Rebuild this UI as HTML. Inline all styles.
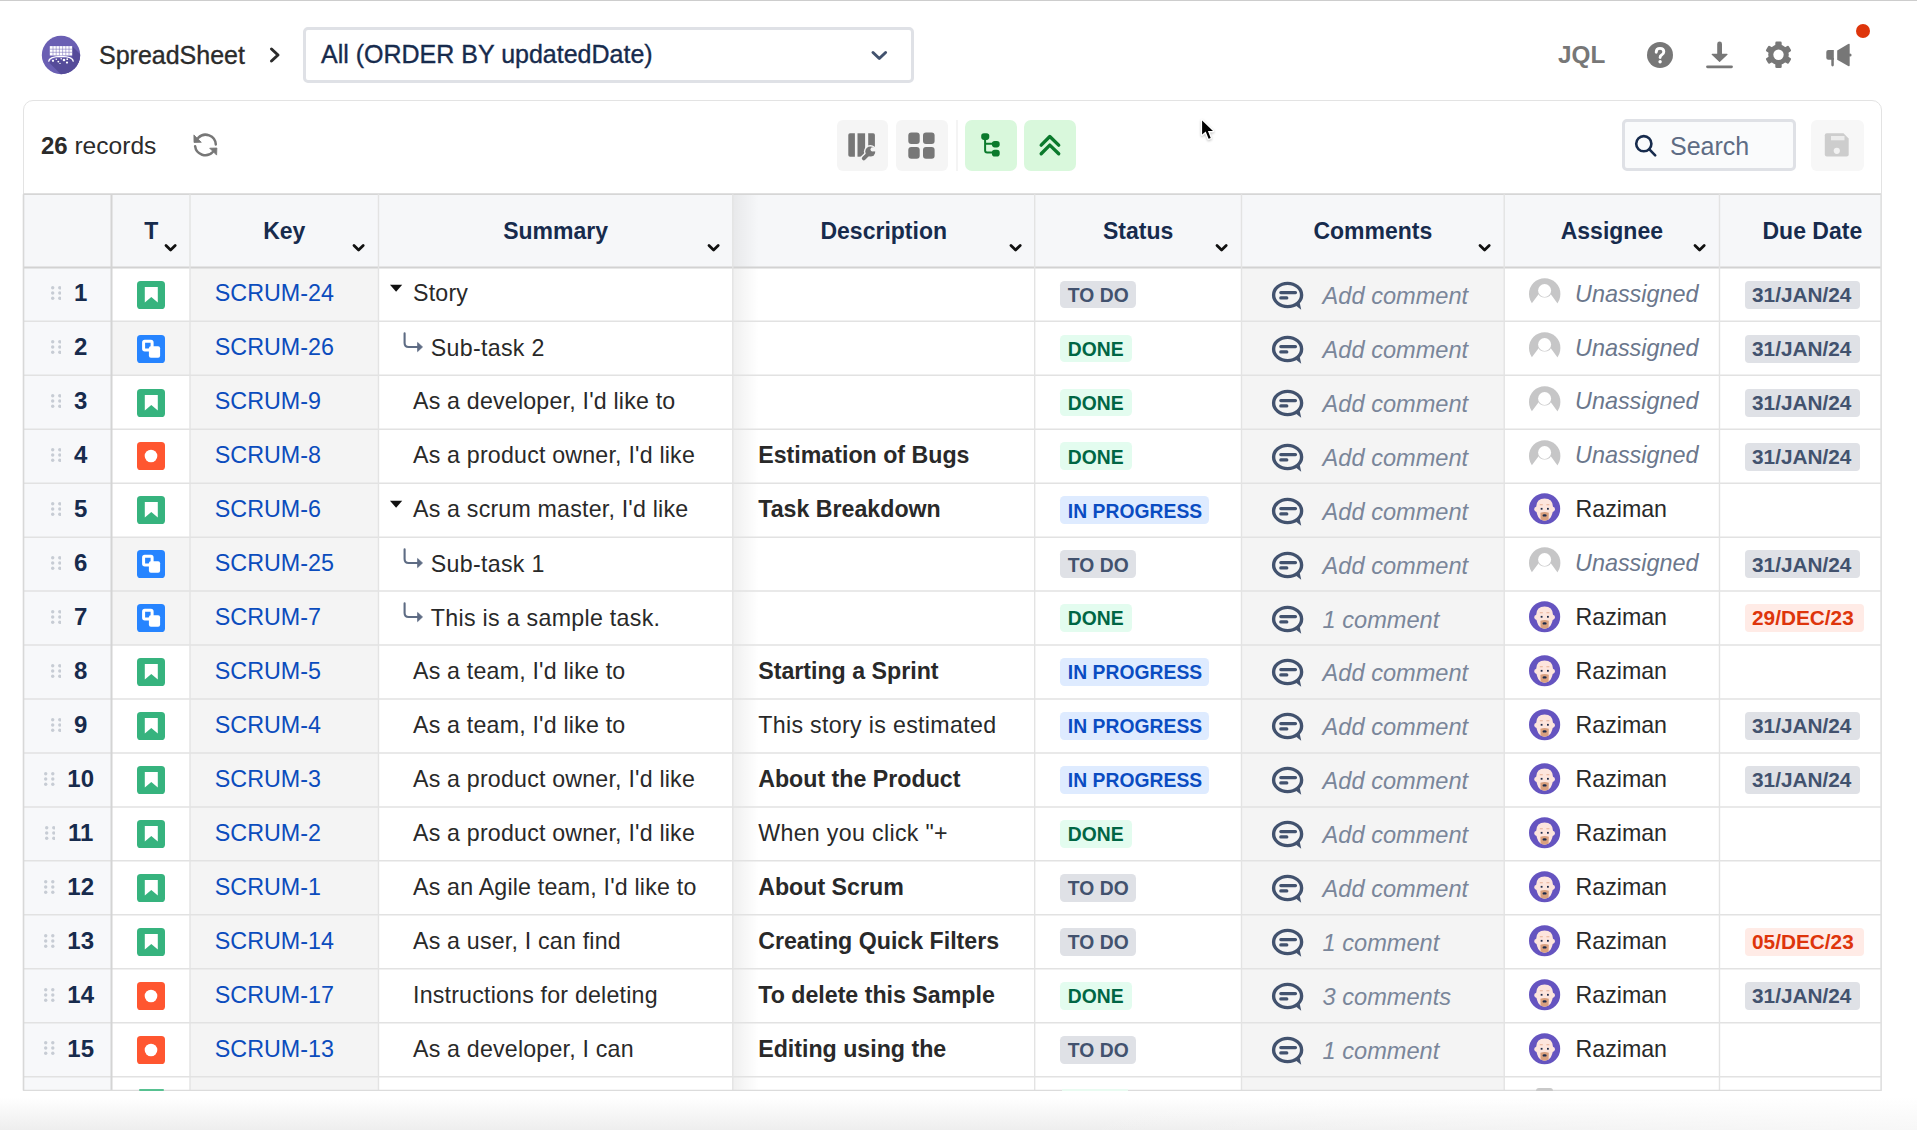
<!DOCTYPE html><html><head><meta charset="utf-8"><style>
*{box-sizing:border-box}
html,body{margin:0;padding:0}
body{width:1917px;height:1130px;overflow:hidden;background:#fff;position:relative;font-family:"Liberation Sans",sans-serif}
.a{position:absolute;white-space:nowrap;line-height:1}
svg.a{overflow:visible}
</style></head><body><div class="a" style="left:0.00px;top:0.00px;width:1917.00px;height:1.20px;background:#cdcdcd;border-radius:0px;"></div>
<svg class="a" style="left:41.00px;top:34.50px;" width="40" height="40" viewBox="0 0 40 40">
<defs><clipPath id="lc"><circle cx="20" cy="20" r="19.2"/></clipPath></defs>
<circle cx="20" cy="20" r="19.2" fill="#6a5fb3"/>
<g clip-path="url(#lc)"><path d="M31.2 11.2 L61.2 41.2 L38.6 58 L8.6 28 L8.6 26.5 Q20 20.5 31.2 24 Z" fill="#554b99"/></g>
<rect x="8.8" y="11.1" width="22.4" height="9.4" fill="#fff"/>
<g stroke="#7a70bb" stroke-width="0.55">
<line x1="8.8" y1="14.2" x2="31.2" y2="14.2"/><line x1="8.8" y1="17.3" x2="31.2" y2="17.3"/>
<line x1="12" y1="11.1" x2="12" y2="20.5"/><line x1="15.2" y1="11.1" x2="15.2" y2="20.5"/><line x1="18.4" y1="11.1" x2="18.4" y2="20.5"/><line x1="21.6" y1="11.1" x2="21.6" y2="20.5"/><line x1="24.8" y1="11.1" x2="24.8" y2="20.5"/><line x1="28" y1="11.1" x2="28" y2="20.5"/>
</g>
<path d="M7.6 26.6 Q8 21.6 20 21.4 Q32 21.6 32.4 26.6" fill="none" stroke="#fff" stroke-width="1.3"/>
<g fill="#fff"><circle cx="12" cy="25.8" r="1.1"/><circle cx="15.3" cy="24.2" r="0.8"/><circle cx="17.3" cy="26.6" r="0.9"/><circle cx="20.2" cy="23.8" r="0.8"/><circle cx="23" cy="25" r="1.3"/><circle cx="26.2" cy="24.2" r="0.9"/><circle cx="26" cy="27.6" r="1.1"/><circle cx="19" cy="28.4" r="0.7"/></g>
</svg>
<div class="a" style="left:99.00px;top:42.63px;font-size:25px;color:#2b2b2b;font-weight:400;font-style:normal;-webkit-text-stroke:0.35px #2b2b2b">SpreadSheet</div>
<svg class="a" style="left:268.00px;top:46.00px;" width="14" height="18" viewBox="0 0 14 18"><polyline points="3.5,3 10,9 3.5,15" fill="none" stroke="#2b2b2b" stroke-width="3" stroke-linecap="round" stroke-linejoin="round"/></svg>
<div class="a" style="left:302.5px;top:26.5px;width:611.5px;height:56px;border:3px solid #dfe1e6;border-radius:5px;background:#fff"></div>
<div class="a" style="left:321.00px;top:42.43px;font-size:25px;color:#172b4d;font-weight:400;font-style:normal;-webkit-text-stroke:0.35px #172b4d">All (ORDER BY updatedDate)</div>
<svg class="a" style="left:870.00px;top:49.00px;" width="18" height="13" viewBox="0 0 18 13"><polyline points="3,3.5 9.3,9.5 15.6,3.5" fill="none" stroke="#42526e" stroke-width="3" stroke-linecap="round" stroke-linejoin="round"/></svg>
<div class="a" style="left:1558.00px;top:43.43px;font-size:24.3px;color:#777;font-weight:700;font-style:normal;">JQL</div>
<svg class="a" style="left:1646.50px;top:41.50px;" width="26" height="26" viewBox="0 0 26 26"><circle cx="13" cy="13" r="13" fill="#777"/><path d="M9.2 10.2 Q9.2 6.4 13 6.4 Q16.8 6.4 16.8 9.8 Q16.8 11.9 14.6 13.1 Q13.1 14 13.1 15.6" fill="none" stroke="#fff" stroke-width="2.9" stroke-linecap="round"/><circle cx="13.1" cy="19.8" r="1.7" fill="#fff"/></svg>
<svg class="a" style="left:1705.50px;top:41.50px;" width="27" height="27" viewBox="0 0 27 27"><path d="M13.6 2 V14" stroke="#777" stroke-width="4.8" stroke-linecap="round"/><path d="M6.2 12.3 L13.6 19.4 L21 12.3 Z" fill="#777" stroke="#777" stroke-width="1.2" stroke-linejoin="round"/><path d="M1.5 24.8 H25.5" stroke="#777" stroke-width="2.8" stroke-linecap="round"/></svg>
<svg class="a" style="left:1764.00px;top:40.00px;" width="29" height="29" viewBox="0 0 29 29"><g fill="#777"><rect x="11.3" y="1.6" width="6.4" height="6" rx="1.3" transform="rotate(0 14.5 14.8)"/><rect x="11.3" y="1.6" width="6.4" height="6" rx="1.3" transform="rotate(60 14.5 14.8)"/><rect x="11.3" y="1.6" width="6.4" height="6" rx="1.3" transform="rotate(120 14.5 14.8)"/><rect x="11.3" y="1.6" width="6.4" height="6" rx="1.3" transform="rotate(180 14.5 14.8)"/><rect x="11.3" y="1.6" width="6.4" height="6" rx="1.3" transform="rotate(240 14.5 14.8)"/><rect x="11.3" y="1.6" width="6.4" height="6" rx="1.3" transform="rotate(300 14.5 14.8)"/><circle cx="14.5" cy="14.8" r="10.3"/></g><circle cx="14.5" cy="14.8" r="5.2" fill="#fff"/></svg>
<svg class="a" style="left:1824.00px;top:41.00px;" width="30" height="28" viewBox="0 0 30 28"><g fill="#777"><path d="M4.3 9.1 H9.8 V18.7 H4.3 Q2.3 18.7 2.3 16.7 V11.1 Q2.3 9.1 4.3 9.1 Z"/><path d="M7.3 17 H9.8 V24 Q9.8 25.4 8.55 25.4 Q7.3 25.4 7.3 24 Z"/><path d="M13.2 9.4 L24.2 2.9 Q25.7 2.1 25.7 3.7 V24.2 Q25.7 25.9 24.2 25.1 L13.2 18.7 Z"/><circle cx="26" cy="14" r="1.6"/></g></svg>
<div class="a" style="left:1856px;top:23.6px;width:14.2px;height:14.2px;border-radius:50%;background:#de350b"></div>
<div class="a" style="left:22.8px;top:100.2px;width:1859px;height:1100px;border:1.4px solid #e3e3e3;border-radius:10px;background:#fff"></div>
<div class="a" style="left:41.00px;top:134.08px;font-size:24px;color:#2b2b2b;font-weight:400;font-style:normal;"><b>26</b> <span style="font-size:24.6px">records</span></div>
<svg class="a" style="left:188.00px;top:128.00px;" width="35" height="34" viewBox="0 0 35 34"><g fill="none" stroke="#777" stroke-width="2.5" stroke-linecap="round"><path d="M27.8 16.4 A10.3 10.3 0 0 0 10.2 9.8"/><path d="M7.1 18.2 A10.3 10.3 0 0 0 24.8 24"/></g><path d="M5.9 6.9 L6 14.5 L13.3 14.3 Z" fill="#777" stroke="#777" stroke-width="0.8" stroke-linejoin="round"/><path d="M21.7 20.2 L28.9 20 L28.6 27.1 Z" fill="#777" stroke="#777" stroke-width="0.8" stroke-linejoin="round"/></svg>
<div class="a" style="left:836.80px;top:119.50px;width:51.50px;height:51.50px;background:#f5f5f5;border-radius:6px;"></div>
<div class="a" style="left:896.20px;top:119.50px;width:51.50px;height:51.50px;background:#f5f5f5;border-radius:6px;"></div>
<div class="a" style="left:955.60px;top:119.50px;width:2.20px;height:51.50px;background:#f4f4f4;border-radius:0px;"></div>
<div class="a" style="left:965.00px;top:119.50px;width:52.00px;height:51.50px;background:#d9f8dc;border-radius:7px;"></div>
<div class="a" style="left:1024.30px;top:119.50px;width:52.00px;height:51.50px;background:#d9f8dc;border-radius:7px;"></div>
<svg class="a" style="left:846.00px;top:131.00px;" width="32" height="32" viewBox="0 0 32 32">
<path fill="#777" d="M4 2.3 Q2.3 2.3 2.3 4 V24 Q2.3 25.7 4 25.7 H8.9 V2.3 Z"/>
<rect x="11.5" y="2.3" width="7.6" height="23.4" fill="#777"/>
<path fill="#777" d="M22.2 2.3 H27.2 Q28.9 2.3 28.9 4 V16 L22.2 16 Z"/>
<path d="M26.7 19.2 L17.2 28.4" stroke="#f4f4f4" stroke-width="7.5" stroke-linecap="round"/>
<circle cx="24.3" cy="20.5" r="6.4" fill="#f4f4f4"/>
<path d="M24.4 20.8 L17.8 27.4" stroke="#777" stroke-width="3.9" stroke-linecap="round"/>
<circle cx="24.3" cy="20.6" r="5" fill="#777"/>
<path d="M25 19.8 L29.6 15.2 L31.5 21 Z" fill="#f4f4f4"/>
<circle cx="26.6" cy="18.4" r="2.1" fill="#f4f4f4"/>
</svg>
<svg class="a" style="left:906.00px;top:130.00px;" width="32" height="32" viewBox="0 0 32 32"><g fill="#777"><rect x="2.3" y="2.5" width="11.4" height="11.4" rx="3"/><rect x="17" y="2.5" width="11.6" height="11.4" rx="3"/><rect x="2.3" y="17.1" width="11.4" height="11.7" rx="3"/><rect x="17" y="17.1" width="11.6" height="11.7" rx="3"/></g></svg>
<svg class="a" style="left:976.00px;top:128.00px;" width="30" height="32" viewBox="0 0 30 32"><g fill="#0b7a2c"><rect x="5.2" y="5.3" width="8.1" height="6.6" rx="2.8"/><rect x="15.9" y="12.9" width="7.8" height="6.5" rx="2.8"/><rect x="15.9" y="21.8" width="7.8" height="6.8" rx="2.8"/></g><path d="M9.1 11 V22.6 Q9.1 24.6 11.1 24.6 H17 M9.1 15.8 H17" fill="none" stroke="#0b7a2c" stroke-width="2"/></svg>
<svg class="a" style="left:1036.00px;top:131.00px;" width="28" height="28" viewBox="0 0 28 28"><g fill="none" stroke="#0b7a2c" stroke-width="3.4" stroke-linecap="round" stroke-linejoin="round"><polyline points="5.2,14.1 13.8,5.5 22.7,14.1"/><polyline points="5.2,22.7 13.8,14.1 22.7,22.7"/></g></svg>
<div class="a" style="left:1621.8px;top:119.2px;width:174.5px;height:52.3px;border:3px solid #dfe1e6;border-radius:5px;background:#fafbfc"></div>
<svg class="a" style="left:1632.00px;top:132.00px;" width="28" height="28" viewBox="0 0 28 28"><circle cx="11.8" cy="11.7" r="7.6" fill="none" stroke="#172b4d" stroke-width="2.6"/><path d="M17.4 17.3 L23.2 23.3" stroke="#172b4d" stroke-width="2.6" stroke-linecap="round"/></svg>
<div class="a" style="left:1670.00px;top:133.63px;font-size:25px;color:#5e6c84;font-weight:400;font-style:normal;">Search</div>
<div class="a" style="left:1811.00px;top:119.50px;width:52.50px;height:51.50px;background:#f7f7f7;border-radius:6px;"></div>
<svg class="a" style="left:1822.00px;top:130.00px;" width="30" height="30" viewBox="0 0 30 30"><path fill="#cdcdcd" d="M2.8 5.2 Q2.8 3.2 4.8 3.2 H21.5 L26.7 8.4 V24.5 Q26.7 26.5 24.7 26.5 H4.8 Q2.8 26.5 2.8 24.5 Z"/><rect x="9" y="6" width="13.5" height="4.3" fill="#ececec"/><circle cx="14.8" cy="20.8" r="3.1" fill="#f2f2f2"/></svg>
<svg class="a" style="left:1196.00px;top:115.00px;" width="24" height="30" viewBox="0 0 24 30"><path d="M6.1 5.4 L6.1 19.6 L9.7 16.6 L12.6 23.8 L14.7 22.9 L11.9 16.1 L17 16.1 Z" fill="#000" stroke="#fff" stroke-width="2.6" stroke-linejoin="round" style="paint-order:stroke fill;filter:drop-shadow(0 1px 1px rgba(0,0,0,.25))"/></svg>
<div class="a" style="left:23.50px;top:194.20px;width:1857.50px;height:73.20px;background:#f6f7f9;border-radius:0px;"></div>
<div class="a" style="left:23.50px;top:267.40px;width:88.00px;height:53.95px;background:#f7f8fa;border-radius:0px;"></div>
<div class="a" style="left:190.00px;top:267.40px;width:188.50px;height:53.95px;background:#f4f4f4;border-radius:0px;"></div>
<div class="a" style="left:1241.50px;top:267.40px;width:262.50px;height:53.95px;background:#f4f4f4;border-radius:0px;"></div>
<div class="a" style="left:23.50px;top:321.35px;width:88.00px;height:53.95px;background:#f7f8fa;border-radius:0px;"></div>
<div class="a" style="left:111.50px;top:321.35px;width:78.50px;height:53.95px;background:#f4f4f4;border-radius:0px;"></div>
<div class="a" style="left:190.00px;top:321.35px;width:188.50px;height:53.95px;background:#f4f4f4;border-radius:0px;"></div>
<div class="a" style="left:1241.50px;top:321.35px;width:262.50px;height:53.95px;background:#f4f4f4;border-radius:0px;"></div>
<div class="a" style="left:23.50px;top:375.30px;width:88.00px;height:53.95px;background:#f7f8fa;border-radius:0px;"></div>
<div class="a" style="left:190.00px;top:375.30px;width:188.50px;height:53.95px;background:#f4f4f4;border-radius:0px;"></div>
<div class="a" style="left:1241.50px;top:375.30px;width:262.50px;height:53.95px;background:#f4f4f4;border-radius:0px;"></div>
<div class="a" style="left:23.50px;top:429.25px;width:88.00px;height:53.95px;background:#f7f8fa;border-radius:0px;"></div>
<div class="a" style="left:190.00px;top:429.25px;width:188.50px;height:53.95px;background:#f4f4f4;border-radius:0px;"></div>
<div class="a" style="left:1241.50px;top:429.25px;width:262.50px;height:53.95px;background:#f4f4f4;border-radius:0px;"></div>
<div class="a" style="left:23.50px;top:483.20px;width:88.00px;height:53.95px;background:#f7f8fa;border-radius:0px;"></div>
<div class="a" style="left:190.00px;top:483.20px;width:188.50px;height:53.95px;background:#f4f4f4;border-radius:0px;"></div>
<div class="a" style="left:1241.50px;top:483.20px;width:262.50px;height:53.95px;background:#f4f4f4;border-radius:0px;"></div>
<div class="a" style="left:23.50px;top:537.15px;width:88.00px;height:53.95px;background:#f7f8fa;border-radius:0px;"></div>
<div class="a" style="left:111.50px;top:537.15px;width:78.50px;height:53.95px;background:#f4f4f4;border-radius:0px;"></div>
<div class="a" style="left:190.00px;top:537.15px;width:188.50px;height:53.95px;background:#f4f4f4;border-radius:0px;"></div>
<div class="a" style="left:1241.50px;top:537.15px;width:262.50px;height:53.95px;background:#f4f4f4;border-radius:0px;"></div>
<div class="a" style="left:23.50px;top:591.10px;width:88.00px;height:53.95px;background:#f7f8fa;border-radius:0px;"></div>
<div class="a" style="left:111.50px;top:591.10px;width:78.50px;height:53.95px;background:#f4f4f4;border-radius:0px;"></div>
<div class="a" style="left:190.00px;top:591.10px;width:188.50px;height:53.95px;background:#f4f4f4;border-radius:0px;"></div>
<div class="a" style="left:1241.50px;top:591.10px;width:262.50px;height:53.95px;background:#f4f4f4;border-radius:0px;"></div>
<div class="a" style="left:23.50px;top:645.05px;width:88.00px;height:53.95px;background:#f7f8fa;border-radius:0px;"></div>
<div class="a" style="left:190.00px;top:645.05px;width:188.50px;height:53.95px;background:#f4f4f4;border-radius:0px;"></div>
<div class="a" style="left:1241.50px;top:645.05px;width:262.50px;height:53.95px;background:#f4f4f4;border-radius:0px;"></div>
<div class="a" style="left:23.50px;top:699.00px;width:88.00px;height:53.95px;background:#f7f8fa;border-radius:0px;"></div>
<div class="a" style="left:190.00px;top:699.00px;width:188.50px;height:53.95px;background:#f4f4f4;border-radius:0px;"></div>
<div class="a" style="left:1241.50px;top:699.00px;width:262.50px;height:53.95px;background:#f4f4f4;border-radius:0px;"></div>
<div class="a" style="left:23.50px;top:752.95px;width:88.00px;height:53.95px;background:#f7f8fa;border-radius:0px;"></div>
<div class="a" style="left:190.00px;top:752.95px;width:188.50px;height:53.95px;background:#f4f4f4;border-radius:0px;"></div>
<div class="a" style="left:1241.50px;top:752.95px;width:262.50px;height:53.95px;background:#f4f4f4;border-radius:0px;"></div>
<div class="a" style="left:23.50px;top:806.90px;width:88.00px;height:53.95px;background:#f7f8fa;border-radius:0px;"></div>
<div class="a" style="left:190.00px;top:806.90px;width:188.50px;height:53.95px;background:#f4f4f4;border-radius:0px;"></div>
<div class="a" style="left:1241.50px;top:806.90px;width:262.50px;height:53.95px;background:#f4f4f4;border-radius:0px;"></div>
<div class="a" style="left:23.50px;top:860.85px;width:88.00px;height:53.95px;background:#f7f8fa;border-radius:0px;"></div>
<div class="a" style="left:190.00px;top:860.85px;width:188.50px;height:53.95px;background:#f4f4f4;border-radius:0px;"></div>
<div class="a" style="left:1241.50px;top:860.85px;width:262.50px;height:53.95px;background:#f4f4f4;border-radius:0px;"></div>
<div class="a" style="left:23.50px;top:914.80px;width:88.00px;height:53.95px;background:#f7f8fa;border-radius:0px;"></div>
<div class="a" style="left:190.00px;top:914.80px;width:188.50px;height:53.95px;background:#f4f4f4;border-radius:0px;"></div>
<div class="a" style="left:1241.50px;top:914.80px;width:262.50px;height:53.95px;background:#f4f4f4;border-radius:0px;"></div>
<div class="a" style="left:23.50px;top:968.75px;width:88.00px;height:53.95px;background:#f7f8fa;border-radius:0px;"></div>
<div class="a" style="left:190.00px;top:968.75px;width:188.50px;height:53.95px;background:#f4f4f4;border-radius:0px;"></div>
<div class="a" style="left:1241.50px;top:968.75px;width:262.50px;height:53.95px;background:#f4f4f4;border-radius:0px;"></div>
<div class="a" style="left:23.50px;top:1022.70px;width:88.00px;height:53.95px;background:#f7f8fa;border-radius:0px;"></div>
<div class="a" style="left:190.00px;top:1022.70px;width:188.50px;height:53.95px;background:#f4f4f4;border-radius:0px;"></div>
<div class="a" style="left:1241.50px;top:1022.70px;width:262.50px;height:53.95px;background:#f4f4f4;border-radius:0px;"></div>
<div class="a" style="left:23.50px;top:1076.65px;width:88.00px;height:13.95px;background:#f7f8fa;border-radius:0px;"></div>
<div class="a" style="left:190.00px;top:1076.65px;width:188.50px;height:13.95px;background:#f4f4f4;border-radius:0px;"></div>
<div class="a" style="left:1241.50px;top:1076.65px;width:262.50px;height:13.95px;background:#f4f4f4;border-radius:0px;"></div>
<div class="a" style="left:733.3px;top:194.2px;width:26px;height:896.4px;background:linear-gradient(90deg,rgba(0,0,0,0.06),rgba(0,0,0,0.0))"></div>
<div class="a" style="left:24px;width:90px;top:267.40px;height:53.95px;display:flex;align-items:center;justify-content:center;gap:12.8px;padding-left:0px"><svg width="10.6" height="14" viewBox="0 0 10.6 14" style="margin-top:-2.4px"><g fill="#c7ccd4"><circle cx="1.7" cy="1.8" r="1.7"/><circle cx="8.8" cy="1.8" r="1.7"/><circle cx="1.7" cy="7" r="1.7"/><circle cx="8.8" cy="7" r="1.7"/><circle cx="1.7" cy="12.3" r="1.7"/><circle cx="8.8" cy="12.3" r="1.7"/></g></svg><span style="font-weight:700;font-size:24px;color:#172b4d;margin-top:-2px">1</span></div>
<svg class="a" style="left:137.20px;top:280.60px;" width="28" height="28" viewBox="0 0 28 28"><rect width="28" height="28" rx="3.6" fill="#36b37e"/><path d="M7.8 6 H20.8 V21.5 L14.3 15.9 L7.8 21.5 Z" fill="#fff"/></svg>
<div class="a" style="left:214.80px;top:282.37px;font-size:23.3px;color:#0b4cbd;font-weight:400;font-style:normal;">SCRUM-24</div>
<svg class="a" style="left:388.00px;top:283.40px;" width="16" height="10" viewBox="0 0 16 10"><path d="M2 1.8 H14.2 L8.1 8.8 Z" fill="#111"/></svg>
<div class="a" style="left:413.00px;top:282.46px;font-size:23.2px;color:#292929;font-weight:400;font-style:normal;letter-spacing:0.2px">Story</div>
<div class="a" style="left:1060.3px;top:280.60px;width:76.2px;height:27.8px;border-radius:4.5px;background:#dfe1e6"></div>
<div class="a" style="left:1067.80px;top:285.76px;font-size:19.3px;color:#42526e;font-weight:700;font-style:normal;letter-spacing:0.05px">TO DO</div>
<svg class="a" style="left:1271.90px;top:281.80px;" width="32" height="30" viewBox="0 0 32 30"><ellipse cx="15.6" cy="13" rx="14" ry="11.6" fill="none" stroke="#42526e" stroke-width="3.4"/><path d="M22.5 22.5 L29.2 27.8 L27.6 20.3 Z" fill="#42526e"/><path d="M8.8 10.6 H23.5 M8.8 15.9 H14.8" stroke="#42526e" stroke-width="3.2" stroke-linecap="round"/></svg>
<div class="a" style="left:1322.60px;top:284.82px;font-size:23.6px;color:#7a869a;font-weight:400;font-style:italic;">Add comment</div>
<svg class="a" style="left:1529.20px;top:277.70px;" width="32" height="32" viewBox="0 0 32 32"><defs><mask id="avm" maskUnits="userSpaceOnUse" x="-2" y="-2" width="36" height="36"><rect x="-2" y="-2" width="36" height="36" fill="#fff"/><circle cx="15.6" cy="12.5" r="6.5" fill="#000"/><path d="M9.6 16.2 L10.8 18 Q15.7 21 20.6 18 L21.8 16.2 L34 33 L-3 33 Z" fill="#000"/></mask></defs>
<circle cx="15.7" cy="15.9" r="15.7" fill="#c6c6c7" mask="url(#avm)"/></svg>
<div class="a" style="left:1575.00px;top:282.59px;font-size:23.4px;color:#6b778c;font-weight:400;font-style:italic;">Unassigned</div>
<div class="a" style="left:1745.1px;top:280.70px;width:114.7px;height:28px;border-radius:4px;background:#dfe1e6"></div>
<div class="a" style="left:1752.00px;top:284.79px;font-size:20.8px;color:#42526e;font-weight:700;font-style:normal;">31/JAN/24</div>
<div class="a" style="left:24px;width:90px;top:321.35px;height:53.95px;display:flex;align-items:center;justify-content:center;gap:12.8px;padding-left:0px"><svg width="10.6" height="14" viewBox="0 0 10.6 14" style="margin-top:-2.4px"><g fill="#c7ccd4"><circle cx="1.7" cy="1.8" r="1.7"/><circle cx="8.8" cy="1.8" r="1.7"/><circle cx="1.7" cy="7" r="1.7"/><circle cx="8.8" cy="7" r="1.7"/><circle cx="1.7" cy="12.3" r="1.7"/><circle cx="8.8" cy="12.3" r="1.7"/></g></svg><span style="font-weight:700;font-size:24px;color:#172b4d;margin-top:-2px">2</span></div>
<svg class="a" style="left:137.20px;top:334.55px;" width="28" height="28" viewBox="0 0 28 28"><rect width="28" height="28" rx="3.6" fill="#2684ff"/><rect x="6.6" y="6.2" width="8.5" height="8.8" rx="1.2" fill="none" stroke="#fff" stroke-width="3"/><rect x="11.9" y="11.3" width="11.2" height="11.5" rx="2" fill="#fff"/></svg>
<div class="a" style="left:214.80px;top:336.32px;font-size:23.3px;color:#0b4cbd;font-weight:400;font-style:normal;">SCRUM-26</div>
<svg class="a" style="left:402.00px;top:331.35px;" width="24" height="24" viewBox="0 0 24 24"><path d="M2.6 2.4 V11.9 Q2.6 15.95 6.6 15.95 H16.5" fill="none" stroke="#5e6c84" stroke-width="2.1" stroke-linecap="round" stroke-linejoin="round"/><path d="M15.6 11.5 L20.5 15.95 L15.6 20.6 Z" fill="#5e6c84" stroke="#5e6c84" stroke-width="0.8" stroke-linejoin="round"/></svg>
<div class="a" style="left:430.80px;top:337.01px;font-size:23.2px;color:#292929;font-weight:400;font-style:normal;letter-spacing:0.3px">Sub-task 2</div>
<div class="a" style="left:1060.3px;top:334.55px;width:71.4px;height:27.8px;border-radius:4.5px;background:#e3fcef"></div>
<div class="a" style="left:1067.80px;top:339.71px;font-size:19.3px;color:#006644;font-weight:700;font-style:normal;letter-spacing:0.05px">DONE</div>
<svg class="a" style="left:1271.90px;top:335.75px;" width="32" height="30" viewBox="0 0 32 30"><ellipse cx="15.6" cy="13" rx="14" ry="11.6" fill="none" stroke="#42526e" stroke-width="3.4"/><path d="M22.5 22.5 L29.2 27.8 L27.6 20.3 Z" fill="#42526e"/><path d="M8.8 10.6 H23.5 M8.8 15.9 H14.8" stroke="#42526e" stroke-width="3.2" stroke-linecap="round"/></svg>
<div class="a" style="left:1322.60px;top:338.77px;font-size:23.6px;color:#7a869a;font-weight:400;font-style:italic;">Add comment</div>
<svg class="a" style="left:1529.20px;top:331.65px;" width="32" height="32" viewBox="0 0 32 32"><defs><mask id="avm" maskUnits="userSpaceOnUse" x="-2" y="-2" width="36" height="36"><rect x="-2" y="-2" width="36" height="36" fill="#fff"/><circle cx="15.6" cy="12.5" r="6.5" fill="#000"/><path d="M9.6 16.2 L10.8 18 Q15.7 21 20.6 18 L21.8 16.2 L34 33 L-3 33 Z" fill="#000"/></mask></defs>
<circle cx="15.7" cy="15.9" r="15.7" fill="#c6c6c7" mask="url(#avm)"/></svg>
<div class="a" style="left:1575.00px;top:336.54px;font-size:23.4px;color:#6b778c;font-weight:400;font-style:italic;">Unassigned</div>
<div class="a" style="left:1745.1px;top:334.65px;width:114.7px;height:28px;border-radius:4px;background:#dfe1e6"></div>
<div class="a" style="left:1752.00px;top:338.74px;font-size:20.8px;color:#42526e;font-weight:700;font-style:normal;">31/JAN/24</div>
<div class="a" style="left:24px;width:90px;top:375.30px;height:53.95px;display:flex;align-items:center;justify-content:center;gap:12.8px;padding-left:0px"><svg width="10.6" height="14" viewBox="0 0 10.6 14" style="margin-top:-2.4px"><g fill="#c7ccd4"><circle cx="1.7" cy="1.8" r="1.7"/><circle cx="8.8" cy="1.8" r="1.7"/><circle cx="1.7" cy="7" r="1.7"/><circle cx="8.8" cy="7" r="1.7"/><circle cx="1.7" cy="12.3" r="1.7"/><circle cx="8.8" cy="12.3" r="1.7"/></g></svg><span style="font-weight:700;font-size:24px;color:#172b4d;margin-top:-2px">3</span></div>
<svg class="a" style="left:137.20px;top:388.50px;" width="28" height="28" viewBox="0 0 28 28"><rect width="28" height="28" rx="3.6" fill="#36b37e"/><path d="M7.8 6 H20.8 V21.5 L14.3 15.9 L7.8 21.5 Z" fill="#fff"/></svg>
<div class="a" style="left:214.80px;top:390.27px;font-size:23.3px;color:#0b4cbd;font-weight:400;font-style:normal;">SCRUM-9</div>
<div class="a" style="left:413.00px;top:390.36px;font-size:23.2px;color:#292929;font-weight:400;font-style:normal;letter-spacing:0.2px">As a developer, I'd like to</div>
<div class="a" style="left:1060.3px;top:388.50px;width:71.4px;height:27.8px;border-radius:4.5px;background:#e3fcef"></div>
<div class="a" style="left:1067.80px;top:393.66px;font-size:19.3px;color:#006644;font-weight:700;font-style:normal;letter-spacing:0.05px">DONE</div>
<svg class="a" style="left:1271.90px;top:389.70px;" width="32" height="30" viewBox="0 0 32 30"><ellipse cx="15.6" cy="13" rx="14" ry="11.6" fill="none" stroke="#42526e" stroke-width="3.4"/><path d="M22.5 22.5 L29.2 27.8 L27.6 20.3 Z" fill="#42526e"/><path d="M8.8 10.6 H23.5 M8.8 15.9 H14.8" stroke="#42526e" stroke-width="3.2" stroke-linecap="round"/></svg>
<div class="a" style="left:1322.60px;top:392.72px;font-size:23.6px;color:#7a869a;font-weight:400;font-style:italic;">Add comment</div>
<svg class="a" style="left:1529.20px;top:385.60px;" width="32" height="32" viewBox="0 0 32 32"><defs><mask id="avm" maskUnits="userSpaceOnUse" x="-2" y="-2" width="36" height="36"><rect x="-2" y="-2" width="36" height="36" fill="#fff"/><circle cx="15.6" cy="12.5" r="6.5" fill="#000"/><path d="M9.6 16.2 L10.8 18 Q15.7 21 20.6 18 L21.8 16.2 L34 33 L-3 33 Z" fill="#000"/></mask></defs>
<circle cx="15.7" cy="15.9" r="15.7" fill="#c6c6c7" mask="url(#avm)"/></svg>
<div class="a" style="left:1575.00px;top:390.49px;font-size:23.4px;color:#6b778c;font-weight:400;font-style:italic;">Unassigned</div>
<div class="a" style="left:1745.1px;top:388.60px;width:114.7px;height:28px;border-radius:4px;background:#dfe1e6"></div>
<div class="a" style="left:1752.00px;top:392.69px;font-size:20.8px;color:#42526e;font-weight:700;font-style:normal;">31/JAN/24</div>
<div class="a" style="left:24px;width:90px;top:429.25px;height:53.95px;display:flex;align-items:center;justify-content:center;gap:12.8px;padding-left:0px"><svg width="10.6" height="14" viewBox="0 0 10.6 14" style="margin-top:-2.4px"><g fill="#c7ccd4"><circle cx="1.7" cy="1.8" r="1.7"/><circle cx="8.8" cy="1.8" r="1.7"/><circle cx="1.7" cy="7" r="1.7"/><circle cx="8.8" cy="7" r="1.7"/><circle cx="1.7" cy="12.3" r="1.7"/><circle cx="8.8" cy="12.3" r="1.7"/></g></svg><span style="font-weight:700;font-size:24px;color:#172b4d;margin-top:-2px">4</span></div>
<svg class="a" style="left:137.20px;top:442.45px;" width="28" height="28" viewBox="0 0 28 28"><rect width="28" height="28" rx="3.6" fill="#ff5630"/><circle cx="14" cy="14" r="6.3" fill="#fff"/></svg>
<div class="a" style="left:214.80px;top:444.22px;font-size:23.3px;color:#0b4cbd;font-weight:400;font-style:normal;">SCRUM-8</div>
<div class="a" style="left:413.00px;top:444.31px;font-size:23.2px;color:#292929;font-weight:400;font-style:normal;letter-spacing:0.2px">As a product owner, I'd like</div>
<div class="a" style="left:758.20px;top:444.31px;font-size:23.2px;color:#292929;font-weight:700;font-style:normal;">Estimation of Bugs</div>
<div class="a" style="left:1060.3px;top:442.45px;width:71.4px;height:27.8px;border-radius:4.5px;background:#e3fcef"></div>
<div class="a" style="left:1067.80px;top:447.61px;font-size:19.3px;color:#006644;font-weight:700;font-style:normal;letter-spacing:0.05px">DONE</div>
<svg class="a" style="left:1271.90px;top:443.65px;" width="32" height="30" viewBox="0 0 32 30"><ellipse cx="15.6" cy="13" rx="14" ry="11.6" fill="none" stroke="#42526e" stroke-width="3.4"/><path d="M22.5 22.5 L29.2 27.8 L27.6 20.3 Z" fill="#42526e"/><path d="M8.8 10.6 H23.5 M8.8 15.9 H14.8" stroke="#42526e" stroke-width="3.2" stroke-linecap="round"/></svg>
<div class="a" style="left:1322.60px;top:446.67px;font-size:23.6px;color:#7a869a;font-weight:400;font-style:italic;">Add comment</div>
<svg class="a" style="left:1529.20px;top:439.55px;" width="32" height="32" viewBox="0 0 32 32"><defs><mask id="avm" maskUnits="userSpaceOnUse" x="-2" y="-2" width="36" height="36"><rect x="-2" y="-2" width="36" height="36" fill="#fff"/><circle cx="15.6" cy="12.5" r="6.5" fill="#000"/><path d="M9.6 16.2 L10.8 18 Q15.7 21 20.6 18 L21.8 16.2 L34 33 L-3 33 Z" fill="#000"/></mask></defs>
<circle cx="15.7" cy="15.9" r="15.7" fill="#c6c6c7" mask="url(#avm)"/></svg>
<div class="a" style="left:1575.00px;top:444.44px;font-size:23.4px;color:#6b778c;font-weight:400;font-style:italic;">Unassigned</div>
<div class="a" style="left:1745.1px;top:442.55px;width:114.7px;height:28px;border-radius:4px;background:#dfe1e6"></div>
<div class="a" style="left:1752.00px;top:446.64px;font-size:20.8px;color:#42526e;font-weight:700;font-style:normal;">31/JAN/24</div>
<div class="a" style="left:24px;width:90px;top:483.20px;height:53.95px;display:flex;align-items:center;justify-content:center;gap:12.8px;padding-left:0px"><svg width="10.6" height="14" viewBox="0 0 10.6 14" style="margin-top:-2.4px"><g fill="#c7ccd4"><circle cx="1.7" cy="1.8" r="1.7"/><circle cx="8.8" cy="1.8" r="1.7"/><circle cx="1.7" cy="7" r="1.7"/><circle cx="8.8" cy="7" r="1.7"/><circle cx="1.7" cy="12.3" r="1.7"/><circle cx="8.8" cy="12.3" r="1.7"/></g></svg><span style="font-weight:700;font-size:24px;color:#172b4d;margin-top:-2px">5</span></div>
<svg class="a" style="left:137.20px;top:496.40px;" width="28" height="28" viewBox="0 0 28 28"><rect width="28" height="28" rx="3.6" fill="#36b37e"/><path d="M7.8 6 H20.8 V21.5 L14.3 15.9 L7.8 21.5 Z" fill="#fff"/></svg>
<div class="a" style="left:214.80px;top:498.17px;font-size:23.3px;color:#0b4cbd;font-weight:400;font-style:normal;">SCRUM-6</div>
<svg class="a" style="left:388.00px;top:499.20px;" width="16" height="10" viewBox="0 0 16 10"><path d="M2 1.8 H14.2 L8.1 8.8 Z" fill="#111"/></svg>
<div class="a" style="left:413.00px;top:498.26px;font-size:23.2px;color:#292929;font-weight:400;font-style:normal;letter-spacing:0.2px">As a scrum master, I'd like</div>
<div class="a" style="left:758.20px;top:498.26px;font-size:23.2px;color:#292929;font-weight:700;font-style:normal;">Task Breakdown</div>
<div class="a" style="left:1060.3px;top:496.40px;width:148.4px;height:27.8px;border-radius:4.5px;background:#deebff"></div>
<div class="a" style="left:1067.80px;top:501.56px;font-size:19.3px;color:#0a4cc2;font-weight:700;font-style:normal;letter-spacing:0.05px">IN PROGRESS</div>
<svg class="a" style="left:1271.90px;top:497.60px;" width="32" height="30" viewBox="0 0 32 30"><ellipse cx="15.6" cy="13" rx="14" ry="11.6" fill="none" stroke="#42526e" stroke-width="3.4"/><path d="M22.5 22.5 L29.2 27.8 L27.6 20.3 Z" fill="#42526e"/><path d="M8.8 10.6 H23.5 M8.8 15.9 H14.8" stroke="#42526e" stroke-width="3.2" stroke-linecap="round"/></svg>
<div class="a" style="left:1322.60px;top:500.62px;font-size:23.6px;color:#7a869a;font-weight:400;font-style:italic;">Add comment</div>
<svg class="a" style="left:1529.20px;top:493.20px;" width="32" height="32" viewBox="0 0 32 32"><circle cx="15.6" cy="15.75" r="15.6" fill="#6554c0"/>
<path d="M15.6 5.6 Q23.6 5.6 24 13.8 Q26.2 14.2 26 16.6 Q25.8 18.6 23.7 18.9 Q22.6 24.2 19.6 26.6 Q17.8 27.7 15.6 27.7 Q13.4 27.7 11.6 26.6 Q8.6 24.2 7.5 18.9 Q5.4 18.6 5.2 16.6 Q5 14.2 7.2 13.8 Q7.6 5.6 15.6 5.6 Z" fill="#fde5dd"/>
<path d="M11.4 19.8 Q15.6 18.4 19.8 19.8 L19.6 26.6 Q17.8 27.7 15.6 27.7 Q13.4 27.7 11.6 26.6 Z" fill="#d9a07e"/>
<ellipse cx="15.6" cy="22.4" rx="2.1" ry="1.2" fill="#1d2b4a"/>
<rect x="11.7" y="14.9" width="1.8" height="1.8" fill="#1d2b4a"/><rect x="18" y="14.9" width="1.8" height="1.8" fill="#1d2b4a"/>
<path d="M10.8 11.8 H13.8 M17.4 11.8 H20.4" stroke="#e8b196" stroke-width="1.1"/></svg>
<div class="a" style="left:1575.50px;top:498.26px;font-size:23.2px;color:#292929;font-weight:400;font-style:normal;">Raziman</div>
<div class="a" style="left:24px;width:90px;top:537.15px;height:53.95px;display:flex;align-items:center;justify-content:center;gap:12.8px;padding-left:0px"><svg width="10.6" height="14" viewBox="0 0 10.6 14" style="margin-top:-2.4px"><g fill="#c7ccd4"><circle cx="1.7" cy="1.8" r="1.7"/><circle cx="8.8" cy="1.8" r="1.7"/><circle cx="1.7" cy="7" r="1.7"/><circle cx="8.8" cy="7" r="1.7"/><circle cx="1.7" cy="12.3" r="1.7"/><circle cx="8.8" cy="12.3" r="1.7"/></g></svg><span style="font-weight:700;font-size:24px;color:#172b4d;margin-top:-2px">6</span></div>
<svg class="a" style="left:137.20px;top:550.35px;" width="28" height="28" viewBox="0 0 28 28"><rect width="28" height="28" rx="3.6" fill="#2684ff"/><rect x="6.6" y="6.2" width="8.5" height="8.8" rx="1.2" fill="none" stroke="#fff" stroke-width="3"/><rect x="11.9" y="11.3" width="11.2" height="11.5" rx="2" fill="#fff"/></svg>
<div class="a" style="left:214.80px;top:552.12px;font-size:23.3px;color:#0b4cbd;font-weight:400;font-style:normal;">SCRUM-25</div>
<svg class="a" style="left:402.00px;top:547.15px;" width="24" height="24" viewBox="0 0 24 24"><path d="M2.6 2.4 V11.9 Q2.6 15.95 6.6 15.95 H16.5" fill="none" stroke="#5e6c84" stroke-width="2.1" stroke-linecap="round" stroke-linejoin="round"/><path d="M15.6 11.5 L20.5 15.95 L15.6 20.6 Z" fill="#5e6c84" stroke="#5e6c84" stroke-width="0.8" stroke-linejoin="round"/></svg>
<div class="a" style="left:430.80px;top:552.81px;font-size:23.2px;color:#292929;font-weight:400;font-style:normal;letter-spacing:0.3px">Sub-task 1</div>
<div class="a" style="left:1060.3px;top:550.35px;width:76.2px;height:27.8px;border-radius:4.5px;background:#dfe1e6"></div>
<div class="a" style="left:1067.80px;top:555.51px;font-size:19.3px;color:#42526e;font-weight:700;font-style:normal;letter-spacing:0.05px">TO DO</div>
<svg class="a" style="left:1271.90px;top:551.55px;" width="32" height="30" viewBox="0 0 32 30"><ellipse cx="15.6" cy="13" rx="14" ry="11.6" fill="none" stroke="#42526e" stroke-width="3.4"/><path d="M22.5 22.5 L29.2 27.8 L27.6 20.3 Z" fill="#42526e"/><path d="M8.8 10.6 H23.5 M8.8 15.9 H14.8" stroke="#42526e" stroke-width="3.2" stroke-linecap="round"/></svg>
<div class="a" style="left:1322.60px;top:554.57px;font-size:23.6px;color:#7a869a;font-weight:400;font-style:italic;">Add comment</div>
<svg class="a" style="left:1529.20px;top:547.45px;" width="32" height="32" viewBox="0 0 32 32"><defs><mask id="avm" maskUnits="userSpaceOnUse" x="-2" y="-2" width="36" height="36"><rect x="-2" y="-2" width="36" height="36" fill="#fff"/><circle cx="15.6" cy="12.5" r="6.5" fill="#000"/><path d="M9.6 16.2 L10.8 18 Q15.7 21 20.6 18 L21.8 16.2 L34 33 L-3 33 Z" fill="#000"/></mask></defs>
<circle cx="15.7" cy="15.9" r="15.7" fill="#c6c6c7" mask="url(#avm)"/></svg>
<div class="a" style="left:1575.00px;top:552.34px;font-size:23.4px;color:#6b778c;font-weight:400;font-style:italic;">Unassigned</div>
<div class="a" style="left:1745.1px;top:550.45px;width:114.7px;height:28px;border-radius:4px;background:#dfe1e6"></div>
<div class="a" style="left:1752.00px;top:554.54px;font-size:20.8px;color:#42526e;font-weight:700;font-style:normal;">31/JAN/24</div>
<div class="a" style="left:24px;width:90px;top:591.10px;height:53.95px;display:flex;align-items:center;justify-content:center;gap:12.8px;padding-left:0px"><svg width="10.6" height="14" viewBox="0 0 10.6 14" style="margin-top:-2.4px"><g fill="#c7ccd4"><circle cx="1.7" cy="1.8" r="1.7"/><circle cx="8.8" cy="1.8" r="1.7"/><circle cx="1.7" cy="7" r="1.7"/><circle cx="8.8" cy="7" r="1.7"/><circle cx="1.7" cy="12.3" r="1.7"/><circle cx="8.8" cy="12.3" r="1.7"/></g></svg><span style="font-weight:700;font-size:24px;color:#172b4d;margin-top:-2px">7</span></div>
<svg class="a" style="left:137.20px;top:604.30px;" width="28" height="28" viewBox="0 0 28 28"><rect width="28" height="28" rx="3.6" fill="#2684ff"/><rect x="6.6" y="6.2" width="8.5" height="8.8" rx="1.2" fill="none" stroke="#fff" stroke-width="3"/><rect x="11.9" y="11.3" width="11.2" height="11.5" rx="2" fill="#fff"/></svg>
<div class="a" style="left:214.80px;top:606.07px;font-size:23.3px;color:#0b4cbd;font-weight:400;font-style:normal;">SCRUM-7</div>
<svg class="a" style="left:402.00px;top:601.10px;" width="24" height="24" viewBox="0 0 24 24"><path d="M2.6 2.4 V11.9 Q2.6 15.95 6.6 15.95 H16.5" fill="none" stroke="#5e6c84" stroke-width="2.1" stroke-linecap="round" stroke-linejoin="round"/><path d="M15.6 11.5 L20.5 15.95 L15.6 20.6 Z" fill="#5e6c84" stroke="#5e6c84" stroke-width="0.8" stroke-linejoin="round"/></svg>
<div class="a" style="left:430.80px;top:606.76px;font-size:23.2px;color:#292929;font-weight:400;font-style:normal;letter-spacing:0.3px">This is a sample task.</div>
<div class="a" style="left:1060.3px;top:604.30px;width:71.4px;height:27.8px;border-radius:4.5px;background:#e3fcef"></div>
<div class="a" style="left:1067.80px;top:609.46px;font-size:19.3px;color:#006644;font-weight:700;font-style:normal;letter-spacing:0.05px">DONE</div>
<svg class="a" style="left:1271.90px;top:605.50px;" width="32" height="30" viewBox="0 0 32 30"><ellipse cx="15.6" cy="13" rx="14" ry="11.6" fill="none" stroke="#42526e" stroke-width="3.4"/><path d="M22.5 22.5 L29.2 27.8 L27.6 20.3 Z" fill="#42526e"/><path d="M8.8 10.6 H23.5 M8.8 15.9 H14.8" stroke="#42526e" stroke-width="3.2" stroke-linecap="round"/></svg>
<div class="a" style="left:1322.60px;top:608.52px;font-size:23.6px;color:#7a869a;font-weight:400;font-style:italic;">1 comment</div>
<svg class="a" style="left:1529.20px;top:601.10px;" width="32" height="32" viewBox="0 0 32 32"><circle cx="15.6" cy="15.75" r="15.6" fill="#6554c0"/>
<path d="M15.6 5.6 Q23.6 5.6 24 13.8 Q26.2 14.2 26 16.6 Q25.8 18.6 23.7 18.9 Q22.6 24.2 19.6 26.6 Q17.8 27.7 15.6 27.7 Q13.4 27.7 11.6 26.6 Q8.6 24.2 7.5 18.9 Q5.4 18.6 5.2 16.6 Q5 14.2 7.2 13.8 Q7.6 5.6 15.6 5.6 Z" fill="#fde5dd"/>
<path d="M11.4 19.8 Q15.6 18.4 19.8 19.8 L19.6 26.6 Q17.8 27.7 15.6 27.7 Q13.4 27.7 11.6 26.6 Z" fill="#d9a07e"/>
<ellipse cx="15.6" cy="22.4" rx="2.1" ry="1.2" fill="#1d2b4a"/>
<rect x="11.7" y="14.9" width="1.8" height="1.8" fill="#1d2b4a"/><rect x="18" y="14.9" width="1.8" height="1.8" fill="#1d2b4a"/>
<path d="M10.8 11.8 H13.8 M17.4 11.8 H20.4" stroke="#e8b196" stroke-width="1.1"/></svg>
<div class="a" style="left:1575.50px;top:606.16px;font-size:23.2px;color:#292929;font-weight:400;font-style:normal;">Raziman</div>
<div class="a" style="left:1745.1px;top:604.40px;width:118.5px;height:28px;border-radius:4px;background:#ffebe6"></div>
<div class="a" style="left:1752.00px;top:608.49px;font-size:20.8px;color:#de350b;font-weight:700;font-style:normal;">29/DEC/23</div>
<div class="a" style="left:24px;width:90px;top:645.05px;height:53.95px;display:flex;align-items:center;justify-content:center;gap:12.8px;padding-left:0px"><svg width="10.6" height="14" viewBox="0 0 10.6 14" style="margin-top:-2.4px"><g fill="#c7ccd4"><circle cx="1.7" cy="1.8" r="1.7"/><circle cx="8.8" cy="1.8" r="1.7"/><circle cx="1.7" cy="7" r="1.7"/><circle cx="8.8" cy="7" r="1.7"/><circle cx="1.7" cy="12.3" r="1.7"/><circle cx="8.8" cy="12.3" r="1.7"/></g></svg><span style="font-weight:700;font-size:24px;color:#172b4d;margin-top:-2px">8</span></div>
<svg class="a" style="left:137.20px;top:658.25px;" width="28" height="28" viewBox="0 0 28 28"><rect width="28" height="28" rx="3.6" fill="#36b37e"/><path d="M7.8 6 H20.8 V21.5 L14.3 15.9 L7.8 21.5 Z" fill="#fff"/></svg>
<div class="a" style="left:214.80px;top:660.02px;font-size:23.3px;color:#0b4cbd;font-weight:400;font-style:normal;">SCRUM-5</div>
<div class="a" style="left:413.00px;top:660.11px;font-size:23.2px;color:#292929;font-weight:400;font-style:normal;letter-spacing:0.2px">As a team, I'd like to</div>
<div class="a" style="left:758.20px;top:660.11px;font-size:23.2px;color:#292929;font-weight:700;font-style:normal;">Starting a Sprint</div>
<div class="a" style="left:1060.3px;top:658.25px;width:148.4px;height:27.8px;border-radius:4.5px;background:#deebff"></div>
<div class="a" style="left:1067.80px;top:663.41px;font-size:19.3px;color:#0a4cc2;font-weight:700;font-style:normal;letter-spacing:0.05px">IN PROGRESS</div>
<svg class="a" style="left:1271.90px;top:659.45px;" width="32" height="30" viewBox="0 0 32 30"><ellipse cx="15.6" cy="13" rx="14" ry="11.6" fill="none" stroke="#42526e" stroke-width="3.4"/><path d="M22.5 22.5 L29.2 27.8 L27.6 20.3 Z" fill="#42526e"/><path d="M8.8 10.6 H23.5 M8.8 15.9 H14.8" stroke="#42526e" stroke-width="3.2" stroke-linecap="round"/></svg>
<div class="a" style="left:1322.60px;top:662.47px;font-size:23.6px;color:#7a869a;font-weight:400;font-style:italic;">Add comment</div>
<svg class="a" style="left:1529.20px;top:655.05px;" width="32" height="32" viewBox="0 0 32 32"><circle cx="15.6" cy="15.75" r="15.6" fill="#6554c0"/>
<path d="M15.6 5.6 Q23.6 5.6 24 13.8 Q26.2 14.2 26 16.6 Q25.8 18.6 23.7 18.9 Q22.6 24.2 19.6 26.6 Q17.8 27.7 15.6 27.7 Q13.4 27.7 11.6 26.6 Q8.6 24.2 7.5 18.9 Q5.4 18.6 5.2 16.6 Q5 14.2 7.2 13.8 Q7.6 5.6 15.6 5.6 Z" fill="#fde5dd"/>
<path d="M11.4 19.8 Q15.6 18.4 19.8 19.8 L19.6 26.6 Q17.8 27.7 15.6 27.7 Q13.4 27.7 11.6 26.6 Z" fill="#d9a07e"/>
<ellipse cx="15.6" cy="22.4" rx="2.1" ry="1.2" fill="#1d2b4a"/>
<rect x="11.7" y="14.9" width="1.8" height="1.8" fill="#1d2b4a"/><rect x="18" y="14.9" width="1.8" height="1.8" fill="#1d2b4a"/>
<path d="M10.8 11.8 H13.8 M17.4 11.8 H20.4" stroke="#e8b196" stroke-width="1.1"/></svg>
<div class="a" style="left:1575.50px;top:660.11px;font-size:23.2px;color:#292929;font-weight:400;font-style:normal;">Raziman</div>
<div class="a" style="left:24px;width:90px;top:699.00px;height:53.95px;display:flex;align-items:center;justify-content:center;gap:12.8px;padding-left:0px"><svg width="10.6" height="14" viewBox="0 0 10.6 14" style="margin-top:-2.4px"><g fill="#c7ccd4"><circle cx="1.7" cy="1.8" r="1.7"/><circle cx="8.8" cy="1.8" r="1.7"/><circle cx="1.7" cy="7" r="1.7"/><circle cx="8.8" cy="7" r="1.7"/><circle cx="1.7" cy="12.3" r="1.7"/><circle cx="8.8" cy="12.3" r="1.7"/></g></svg><span style="font-weight:700;font-size:24px;color:#172b4d;margin-top:-2px">9</span></div>
<svg class="a" style="left:137.20px;top:712.20px;" width="28" height="28" viewBox="0 0 28 28"><rect width="28" height="28" rx="3.6" fill="#36b37e"/><path d="M7.8 6 H20.8 V21.5 L14.3 15.9 L7.8 21.5 Z" fill="#fff"/></svg>
<div class="a" style="left:214.80px;top:713.97px;font-size:23.3px;color:#0b4cbd;font-weight:400;font-style:normal;">SCRUM-4</div>
<div class="a" style="left:413.00px;top:714.06px;font-size:23.2px;color:#292929;font-weight:400;font-style:normal;letter-spacing:0.2px">As a team, I'd like to</div>
<div class="a" style="left:758.20px;top:714.06px;font-size:23.2px;color:#292929;font-weight:400;font-style:normal;letter-spacing:0.33px">This story is estimated</div>
<div class="a" style="left:1060.3px;top:712.20px;width:148.4px;height:27.8px;border-radius:4.5px;background:#deebff"></div>
<div class="a" style="left:1067.80px;top:717.36px;font-size:19.3px;color:#0a4cc2;font-weight:700;font-style:normal;letter-spacing:0.05px">IN PROGRESS</div>
<svg class="a" style="left:1271.90px;top:713.40px;" width="32" height="30" viewBox="0 0 32 30"><ellipse cx="15.6" cy="13" rx="14" ry="11.6" fill="none" stroke="#42526e" stroke-width="3.4"/><path d="M22.5 22.5 L29.2 27.8 L27.6 20.3 Z" fill="#42526e"/><path d="M8.8 10.6 H23.5 M8.8 15.9 H14.8" stroke="#42526e" stroke-width="3.2" stroke-linecap="round"/></svg>
<div class="a" style="left:1322.60px;top:716.42px;font-size:23.6px;color:#7a869a;font-weight:400;font-style:italic;">Add comment</div>
<svg class="a" style="left:1529.20px;top:709.00px;" width="32" height="32" viewBox="0 0 32 32"><circle cx="15.6" cy="15.75" r="15.6" fill="#6554c0"/>
<path d="M15.6 5.6 Q23.6 5.6 24 13.8 Q26.2 14.2 26 16.6 Q25.8 18.6 23.7 18.9 Q22.6 24.2 19.6 26.6 Q17.8 27.7 15.6 27.7 Q13.4 27.7 11.6 26.6 Q8.6 24.2 7.5 18.9 Q5.4 18.6 5.2 16.6 Q5 14.2 7.2 13.8 Q7.6 5.6 15.6 5.6 Z" fill="#fde5dd"/>
<path d="M11.4 19.8 Q15.6 18.4 19.8 19.8 L19.6 26.6 Q17.8 27.7 15.6 27.7 Q13.4 27.7 11.6 26.6 Z" fill="#d9a07e"/>
<ellipse cx="15.6" cy="22.4" rx="2.1" ry="1.2" fill="#1d2b4a"/>
<rect x="11.7" y="14.9" width="1.8" height="1.8" fill="#1d2b4a"/><rect x="18" y="14.9" width="1.8" height="1.8" fill="#1d2b4a"/>
<path d="M10.8 11.8 H13.8 M17.4 11.8 H20.4" stroke="#e8b196" stroke-width="1.1"/></svg>
<div class="a" style="left:1575.50px;top:714.06px;font-size:23.2px;color:#292929;font-weight:400;font-style:normal;">Raziman</div>
<div class="a" style="left:1745.1px;top:712.30px;width:114.7px;height:28px;border-radius:4px;background:#dfe1e6"></div>
<div class="a" style="left:1752.00px;top:716.39px;font-size:20.8px;color:#42526e;font-weight:700;font-style:normal;">31/JAN/24</div>
<div class="a" style="left:24px;width:90px;top:752.95px;height:53.95px;display:flex;align-items:center;justify-content:center;gap:12.8px;padding-left:0px"><svg width="10.6" height="14" viewBox="0 0 10.6 14" style="margin-top:-2.4px"><g fill="#c7ccd4"><circle cx="1.7" cy="1.8" r="1.7"/><circle cx="8.8" cy="1.8" r="1.7"/><circle cx="1.7" cy="7" r="1.7"/><circle cx="8.8" cy="7" r="1.7"/><circle cx="1.7" cy="12.3" r="1.7"/><circle cx="8.8" cy="12.3" r="1.7"/></g></svg><span style="font-weight:700;font-size:24px;color:#172b4d;margin-top:-2px">10</span></div>
<svg class="a" style="left:137.20px;top:766.15px;" width="28" height="28" viewBox="0 0 28 28"><rect width="28" height="28" rx="3.6" fill="#36b37e"/><path d="M7.8 6 H20.8 V21.5 L14.3 15.9 L7.8 21.5 Z" fill="#fff"/></svg>
<div class="a" style="left:214.80px;top:767.92px;font-size:23.3px;color:#0b4cbd;font-weight:400;font-style:normal;">SCRUM-3</div>
<div class="a" style="left:413.00px;top:768.01px;font-size:23.2px;color:#292929;font-weight:400;font-style:normal;letter-spacing:0.2px">As a product owner, I'd like</div>
<div class="a" style="left:758.20px;top:768.01px;font-size:23.2px;color:#292929;font-weight:700;font-style:normal;">About the Product</div>
<div class="a" style="left:1060.3px;top:766.15px;width:148.4px;height:27.8px;border-radius:4.5px;background:#deebff"></div>
<div class="a" style="left:1067.80px;top:771.31px;font-size:19.3px;color:#0a4cc2;font-weight:700;font-style:normal;letter-spacing:0.05px">IN PROGRESS</div>
<svg class="a" style="left:1271.90px;top:767.35px;" width="32" height="30" viewBox="0 0 32 30"><ellipse cx="15.6" cy="13" rx="14" ry="11.6" fill="none" stroke="#42526e" stroke-width="3.4"/><path d="M22.5 22.5 L29.2 27.8 L27.6 20.3 Z" fill="#42526e"/><path d="M8.8 10.6 H23.5 M8.8 15.9 H14.8" stroke="#42526e" stroke-width="3.2" stroke-linecap="round"/></svg>
<div class="a" style="left:1322.60px;top:770.37px;font-size:23.6px;color:#7a869a;font-weight:400;font-style:italic;">Add comment</div>
<svg class="a" style="left:1529.20px;top:762.95px;" width="32" height="32" viewBox="0 0 32 32"><circle cx="15.6" cy="15.75" r="15.6" fill="#6554c0"/>
<path d="M15.6 5.6 Q23.6 5.6 24 13.8 Q26.2 14.2 26 16.6 Q25.8 18.6 23.7 18.9 Q22.6 24.2 19.6 26.6 Q17.8 27.7 15.6 27.7 Q13.4 27.7 11.6 26.6 Q8.6 24.2 7.5 18.9 Q5.4 18.6 5.2 16.6 Q5 14.2 7.2 13.8 Q7.6 5.6 15.6 5.6 Z" fill="#fde5dd"/>
<path d="M11.4 19.8 Q15.6 18.4 19.8 19.8 L19.6 26.6 Q17.8 27.7 15.6 27.7 Q13.4 27.7 11.6 26.6 Z" fill="#d9a07e"/>
<ellipse cx="15.6" cy="22.4" rx="2.1" ry="1.2" fill="#1d2b4a"/>
<rect x="11.7" y="14.9" width="1.8" height="1.8" fill="#1d2b4a"/><rect x="18" y="14.9" width="1.8" height="1.8" fill="#1d2b4a"/>
<path d="M10.8 11.8 H13.8 M17.4 11.8 H20.4" stroke="#e8b196" stroke-width="1.1"/></svg>
<div class="a" style="left:1575.50px;top:768.01px;font-size:23.2px;color:#292929;font-weight:400;font-style:normal;">Raziman</div>
<div class="a" style="left:1745.1px;top:766.25px;width:114.7px;height:28px;border-radius:4px;background:#dfe1e6"></div>
<div class="a" style="left:1752.00px;top:770.34px;font-size:20.8px;color:#42526e;font-weight:700;font-style:normal;">31/JAN/24</div>
<div class="a" style="left:24px;width:90px;top:806.90px;height:53.95px;display:flex;align-items:center;justify-content:center;gap:12.8px;padding-left:0px"><svg width="10.6" height="14" viewBox="0 0 10.6 14" style="margin-top:-2.4px"><g fill="#c7ccd4"><circle cx="1.7" cy="1.8" r="1.7"/><circle cx="8.8" cy="1.8" r="1.7"/><circle cx="1.7" cy="7" r="1.7"/><circle cx="8.8" cy="7" r="1.7"/><circle cx="1.7" cy="12.3" r="1.7"/><circle cx="8.8" cy="12.3" r="1.7"/></g></svg><span style="font-weight:700;font-size:24px;color:#172b4d;margin-top:-2px">11</span></div>
<svg class="a" style="left:137.20px;top:820.10px;" width="28" height="28" viewBox="0 0 28 28"><rect width="28" height="28" rx="3.6" fill="#36b37e"/><path d="M7.8 6 H20.8 V21.5 L14.3 15.9 L7.8 21.5 Z" fill="#fff"/></svg>
<div class="a" style="left:214.80px;top:821.87px;font-size:23.3px;color:#0b4cbd;font-weight:400;font-style:normal;">SCRUM-2</div>
<div class="a" style="left:413.00px;top:821.96px;font-size:23.2px;color:#292929;font-weight:400;font-style:normal;letter-spacing:0.2px">As a product owner, I'd like</div>
<div class="a" style="left:758.20px;top:821.96px;font-size:23.2px;color:#292929;font-weight:400;font-style:normal;letter-spacing:0.33px">When you click "+</div>
<div class="a" style="left:1060.3px;top:820.10px;width:71.4px;height:27.8px;border-radius:4.5px;background:#e3fcef"></div>
<div class="a" style="left:1067.80px;top:825.26px;font-size:19.3px;color:#006644;font-weight:700;font-style:normal;letter-spacing:0.05px">DONE</div>
<svg class="a" style="left:1271.90px;top:821.30px;" width="32" height="30" viewBox="0 0 32 30"><ellipse cx="15.6" cy="13" rx="14" ry="11.6" fill="none" stroke="#42526e" stroke-width="3.4"/><path d="M22.5 22.5 L29.2 27.8 L27.6 20.3 Z" fill="#42526e"/><path d="M8.8 10.6 H23.5 M8.8 15.9 H14.8" stroke="#42526e" stroke-width="3.2" stroke-linecap="round"/></svg>
<div class="a" style="left:1322.60px;top:824.32px;font-size:23.6px;color:#7a869a;font-weight:400;font-style:italic;">Add comment</div>
<svg class="a" style="left:1529.20px;top:816.90px;" width="32" height="32" viewBox="0 0 32 32"><circle cx="15.6" cy="15.75" r="15.6" fill="#6554c0"/>
<path d="M15.6 5.6 Q23.6 5.6 24 13.8 Q26.2 14.2 26 16.6 Q25.8 18.6 23.7 18.9 Q22.6 24.2 19.6 26.6 Q17.8 27.7 15.6 27.7 Q13.4 27.7 11.6 26.6 Q8.6 24.2 7.5 18.9 Q5.4 18.6 5.2 16.6 Q5 14.2 7.2 13.8 Q7.6 5.6 15.6 5.6 Z" fill="#fde5dd"/>
<path d="M11.4 19.8 Q15.6 18.4 19.8 19.8 L19.6 26.6 Q17.8 27.7 15.6 27.7 Q13.4 27.7 11.6 26.6 Z" fill="#d9a07e"/>
<ellipse cx="15.6" cy="22.4" rx="2.1" ry="1.2" fill="#1d2b4a"/>
<rect x="11.7" y="14.9" width="1.8" height="1.8" fill="#1d2b4a"/><rect x="18" y="14.9" width="1.8" height="1.8" fill="#1d2b4a"/>
<path d="M10.8 11.8 H13.8 M17.4 11.8 H20.4" stroke="#e8b196" stroke-width="1.1"/></svg>
<div class="a" style="left:1575.50px;top:821.96px;font-size:23.2px;color:#292929;font-weight:400;font-style:normal;">Raziman</div>
<div class="a" style="left:24px;width:90px;top:860.85px;height:53.95px;display:flex;align-items:center;justify-content:center;gap:12.8px;padding-left:0px"><svg width="10.6" height="14" viewBox="0 0 10.6 14" style="margin-top:-2.4px"><g fill="#c7ccd4"><circle cx="1.7" cy="1.8" r="1.7"/><circle cx="8.8" cy="1.8" r="1.7"/><circle cx="1.7" cy="7" r="1.7"/><circle cx="8.8" cy="7" r="1.7"/><circle cx="1.7" cy="12.3" r="1.7"/><circle cx="8.8" cy="12.3" r="1.7"/></g></svg><span style="font-weight:700;font-size:24px;color:#172b4d;margin-top:-2px">12</span></div>
<svg class="a" style="left:137.20px;top:874.05px;" width="28" height="28" viewBox="0 0 28 28"><rect width="28" height="28" rx="3.6" fill="#36b37e"/><path d="M7.8 6 H20.8 V21.5 L14.3 15.9 L7.8 21.5 Z" fill="#fff"/></svg>
<div class="a" style="left:214.80px;top:875.82px;font-size:23.3px;color:#0b4cbd;font-weight:400;font-style:normal;">SCRUM-1</div>
<div class="a" style="left:413.00px;top:875.91px;font-size:23.2px;color:#292929;font-weight:400;font-style:normal;letter-spacing:0.2px">As an Agile team, I'd like to</div>
<div class="a" style="left:758.20px;top:875.91px;font-size:23.2px;color:#292929;font-weight:700;font-style:normal;">About Scrum</div>
<div class="a" style="left:1060.3px;top:874.05px;width:76.2px;height:27.8px;border-radius:4.5px;background:#dfe1e6"></div>
<div class="a" style="left:1067.80px;top:879.21px;font-size:19.3px;color:#42526e;font-weight:700;font-style:normal;letter-spacing:0.05px">TO DO</div>
<svg class="a" style="left:1271.90px;top:875.25px;" width="32" height="30" viewBox="0 0 32 30"><ellipse cx="15.6" cy="13" rx="14" ry="11.6" fill="none" stroke="#42526e" stroke-width="3.4"/><path d="M22.5 22.5 L29.2 27.8 L27.6 20.3 Z" fill="#42526e"/><path d="M8.8 10.6 H23.5 M8.8 15.9 H14.8" stroke="#42526e" stroke-width="3.2" stroke-linecap="round"/></svg>
<div class="a" style="left:1322.60px;top:878.27px;font-size:23.6px;color:#7a869a;font-weight:400;font-style:italic;">Add comment</div>
<svg class="a" style="left:1529.20px;top:870.85px;" width="32" height="32" viewBox="0 0 32 32"><circle cx="15.6" cy="15.75" r="15.6" fill="#6554c0"/>
<path d="M15.6 5.6 Q23.6 5.6 24 13.8 Q26.2 14.2 26 16.6 Q25.8 18.6 23.7 18.9 Q22.6 24.2 19.6 26.6 Q17.8 27.7 15.6 27.7 Q13.4 27.7 11.6 26.6 Q8.6 24.2 7.5 18.9 Q5.4 18.6 5.2 16.6 Q5 14.2 7.2 13.8 Q7.6 5.6 15.6 5.6 Z" fill="#fde5dd"/>
<path d="M11.4 19.8 Q15.6 18.4 19.8 19.8 L19.6 26.6 Q17.8 27.7 15.6 27.7 Q13.4 27.7 11.6 26.6 Z" fill="#d9a07e"/>
<ellipse cx="15.6" cy="22.4" rx="2.1" ry="1.2" fill="#1d2b4a"/>
<rect x="11.7" y="14.9" width="1.8" height="1.8" fill="#1d2b4a"/><rect x="18" y="14.9" width="1.8" height="1.8" fill="#1d2b4a"/>
<path d="M10.8 11.8 H13.8 M17.4 11.8 H20.4" stroke="#e8b196" stroke-width="1.1"/></svg>
<div class="a" style="left:1575.50px;top:875.91px;font-size:23.2px;color:#292929;font-weight:400;font-style:normal;">Raziman</div>
<div class="a" style="left:24px;width:90px;top:914.80px;height:53.95px;display:flex;align-items:center;justify-content:center;gap:12.8px;padding-left:0px"><svg width="10.6" height="14" viewBox="0 0 10.6 14" style="margin-top:-2.4px"><g fill="#c7ccd4"><circle cx="1.7" cy="1.8" r="1.7"/><circle cx="8.8" cy="1.8" r="1.7"/><circle cx="1.7" cy="7" r="1.7"/><circle cx="8.8" cy="7" r="1.7"/><circle cx="1.7" cy="12.3" r="1.7"/><circle cx="8.8" cy="12.3" r="1.7"/></g></svg><span style="font-weight:700;font-size:24px;color:#172b4d;margin-top:-2px">13</span></div>
<svg class="a" style="left:137.20px;top:928.00px;" width="28" height="28" viewBox="0 0 28 28"><rect width="28" height="28" rx="3.6" fill="#36b37e"/><path d="M7.8 6 H20.8 V21.5 L14.3 15.9 L7.8 21.5 Z" fill="#fff"/></svg>
<div class="a" style="left:214.80px;top:929.77px;font-size:23.3px;color:#0b4cbd;font-weight:400;font-style:normal;">SCRUM-14</div>
<div class="a" style="left:413.00px;top:929.86px;font-size:23.2px;color:#292929;font-weight:400;font-style:normal;letter-spacing:0.2px">As a user, I can find</div>
<div class="a" style="left:758.20px;top:929.86px;font-size:23.2px;color:#292929;font-weight:700;font-style:normal;">Creating Quick Filters</div>
<div class="a" style="left:1060.3px;top:928.00px;width:76.2px;height:27.8px;border-radius:4.5px;background:#dfe1e6"></div>
<div class="a" style="left:1067.80px;top:933.16px;font-size:19.3px;color:#42526e;font-weight:700;font-style:normal;letter-spacing:0.05px">TO DO</div>
<svg class="a" style="left:1271.90px;top:929.20px;" width="32" height="30" viewBox="0 0 32 30"><ellipse cx="15.6" cy="13" rx="14" ry="11.6" fill="none" stroke="#42526e" stroke-width="3.4"/><path d="M22.5 22.5 L29.2 27.8 L27.6 20.3 Z" fill="#42526e"/><path d="M8.8 10.6 H23.5 M8.8 15.9 H14.8" stroke="#42526e" stroke-width="3.2" stroke-linecap="round"/></svg>
<div class="a" style="left:1322.60px;top:932.22px;font-size:23.6px;color:#7a869a;font-weight:400;font-style:italic;">1 comment</div>
<svg class="a" style="left:1529.20px;top:924.80px;" width="32" height="32" viewBox="0 0 32 32"><circle cx="15.6" cy="15.75" r="15.6" fill="#6554c0"/>
<path d="M15.6 5.6 Q23.6 5.6 24 13.8 Q26.2 14.2 26 16.6 Q25.8 18.6 23.7 18.9 Q22.6 24.2 19.6 26.6 Q17.8 27.7 15.6 27.7 Q13.4 27.7 11.6 26.6 Q8.6 24.2 7.5 18.9 Q5.4 18.6 5.2 16.6 Q5 14.2 7.2 13.8 Q7.6 5.6 15.6 5.6 Z" fill="#fde5dd"/>
<path d="M11.4 19.8 Q15.6 18.4 19.8 19.8 L19.6 26.6 Q17.8 27.7 15.6 27.7 Q13.4 27.7 11.6 26.6 Z" fill="#d9a07e"/>
<ellipse cx="15.6" cy="22.4" rx="2.1" ry="1.2" fill="#1d2b4a"/>
<rect x="11.7" y="14.9" width="1.8" height="1.8" fill="#1d2b4a"/><rect x="18" y="14.9" width="1.8" height="1.8" fill="#1d2b4a"/>
<path d="M10.8 11.8 H13.8 M17.4 11.8 H20.4" stroke="#e8b196" stroke-width="1.1"/></svg>
<div class="a" style="left:1575.50px;top:929.86px;font-size:23.2px;color:#292929;font-weight:400;font-style:normal;">Raziman</div>
<div class="a" style="left:1745.1px;top:928.10px;width:118.5px;height:28px;border-radius:4px;background:#ffebe6"></div>
<div class="a" style="left:1752.00px;top:932.19px;font-size:20.8px;color:#de350b;font-weight:700;font-style:normal;">05/DEC/23</div>
<div class="a" style="left:24px;width:90px;top:968.75px;height:53.95px;display:flex;align-items:center;justify-content:center;gap:12.8px;padding-left:0px"><svg width="10.6" height="14" viewBox="0 0 10.6 14" style="margin-top:-2.4px"><g fill="#c7ccd4"><circle cx="1.7" cy="1.8" r="1.7"/><circle cx="8.8" cy="1.8" r="1.7"/><circle cx="1.7" cy="7" r="1.7"/><circle cx="8.8" cy="7" r="1.7"/><circle cx="1.7" cy="12.3" r="1.7"/><circle cx="8.8" cy="12.3" r="1.7"/></g></svg><span style="font-weight:700;font-size:24px;color:#172b4d;margin-top:-2px">14</span></div>
<svg class="a" style="left:137.20px;top:981.95px;" width="28" height="28" viewBox="0 0 28 28"><rect width="28" height="28" rx="3.6" fill="#ff5630"/><circle cx="14" cy="14" r="6.3" fill="#fff"/></svg>
<div class="a" style="left:214.80px;top:983.72px;font-size:23.3px;color:#0b4cbd;font-weight:400;font-style:normal;">SCRUM-17</div>
<div class="a" style="left:413.00px;top:983.81px;font-size:23.2px;color:#292929;font-weight:400;font-style:normal;letter-spacing:0.2px">Instructions for deleting</div>
<div class="a" style="left:758.20px;top:983.81px;font-size:23.2px;color:#292929;font-weight:700;font-style:normal;">To delete this Sample</div>
<div class="a" style="left:1060.3px;top:981.95px;width:71.4px;height:27.8px;border-radius:4.5px;background:#e3fcef"></div>
<div class="a" style="left:1067.80px;top:987.11px;font-size:19.3px;color:#006644;font-weight:700;font-style:normal;letter-spacing:0.05px">DONE</div>
<svg class="a" style="left:1271.90px;top:983.15px;" width="32" height="30" viewBox="0 0 32 30"><ellipse cx="15.6" cy="13" rx="14" ry="11.6" fill="none" stroke="#42526e" stroke-width="3.4"/><path d="M22.5 22.5 L29.2 27.8 L27.6 20.3 Z" fill="#42526e"/><path d="M8.8 10.6 H23.5 M8.8 15.9 H14.8" stroke="#42526e" stroke-width="3.2" stroke-linecap="round"/></svg>
<div class="a" style="left:1322.60px;top:986.17px;font-size:23.6px;color:#7a869a;font-weight:400;font-style:italic;">3 comments</div>
<svg class="a" style="left:1529.20px;top:978.75px;" width="32" height="32" viewBox="0 0 32 32"><circle cx="15.6" cy="15.75" r="15.6" fill="#6554c0"/>
<path d="M15.6 5.6 Q23.6 5.6 24 13.8 Q26.2 14.2 26 16.6 Q25.8 18.6 23.7 18.9 Q22.6 24.2 19.6 26.6 Q17.8 27.7 15.6 27.7 Q13.4 27.7 11.6 26.6 Q8.6 24.2 7.5 18.9 Q5.4 18.6 5.2 16.6 Q5 14.2 7.2 13.8 Q7.6 5.6 15.6 5.6 Z" fill="#fde5dd"/>
<path d="M11.4 19.8 Q15.6 18.4 19.8 19.8 L19.6 26.6 Q17.8 27.7 15.6 27.7 Q13.4 27.7 11.6 26.6 Z" fill="#d9a07e"/>
<ellipse cx="15.6" cy="22.4" rx="2.1" ry="1.2" fill="#1d2b4a"/>
<rect x="11.7" y="14.9" width="1.8" height="1.8" fill="#1d2b4a"/><rect x="18" y="14.9" width="1.8" height="1.8" fill="#1d2b4a"/>
<path d="M10.8 11.8 H13.8 M17.4 11.8 H20.4" stroke="#e8b196" stroke-width="1.1"/></svg>
<div class="a" style="left:1575.50px;top:983.81px;font-size:23.2px;color:#292929;font-weight:400;font-style:normal;">Raziman</div>
<div class="a" style="left:1745.1px;top:982.05px;width:114.7px;height:28px;border-radius:4px;background:#dfe1e6"></div>
<div class="a" style="left:1752.00px;top:986.14px;font-size:20.8px;color:#42526e;font-weight:700;font-style:normal;">31/JAN/24</div>
<div class="a" style="left:24px;width:90px;top:1022.70px;height:53.95px;display:flex;align-items:center;justify-content:center;gap:12.8px;padding-left:0px"><svg width="10.6" height="14" viewBox="0 0 10.6 14" style="margin-top:-2.4px"><g fill="#c7ccd4"><circle cx="1.7" cy="1.8" r="1.7"/><circle cx="8.8" cy="1.8" r="1.7"/><circle cx="1.7" cy="7" r="1.7"/><circle cx="8.8" cy="7" r="1.7"/><circle cx="1.7" cy="12.3" r="1.7"/><circle cx="8.8" cy="12.3" r="1.7"/></g></svg><span style="font-weight:700;font-size:24px;color:#172b4d;margin-top:-2px">15</span></div>
<svg class="a" style="left:137.20px;top:1035.90px;" width="28" height="28" viewBox="0 0 28 28"><rect width="28" height="28" rx="3.6" fill="#ff5630"/><circle cx="14" cy="14" r="6.3" fill="#fff"/></svg>
<div class="a" style="left:214.80px;top:1037.67px;font-size:23.3px;color:#0b4cbd;font-weight:400;font-style:normal;">SCRUM-13</div>
<div class="a" style="left:413.00px;top:1037.76px;font-size:23.2px;color:#292929;font-weight:400;font-style:normal;letter-spacing:0.2px">As a developer, I can</div>
<div class="a" style="left:758.20px;top:1037.76px;font-size:23.2px;color:#292929;font-weight:700;font-style:normal;">Editing using the</div>
<div class="a" style="left:1060.3px;top:1035.90px;width:76.2px;height:27.8px;border-radius:4.5px;background:#dfe1e6"></div>
<div class="a" style="left:1067.80px;top:1041.06px;font-size:19.3px;color:#42526e;font-weight:700;font-style:normal;letter-spacing:0.05px">TO DO</div>
<svg class="a" style="left:1271.90px;top:1037.10px;" width="32" height="30" viewBox="0 0 32 30"><ellipse cx="15.6" cy="13" rx="14" ry="11.6" fill="none" stroke="#42526e" stroke-width="3.4"/><path d="M22.5 22.5 L29.2 27.8 L27.6 20.3 Z" fill="#42526e"/><path d="M8.8 10.6 H23.5 M8.8 15.9 H14.8" stroke="#42526e" stroke-width="3.2" stroke-linecap="round"/></svg>
<div class="a" style="left:1322.60px;top:1040.12px;font-size:23.6px;color:#7a869a;font-weight:400;font-style:italic;">1 comment</div>
<svg class="a" style="left:1529.20px;top:1032.70px;" width="32" height="32" viewBox="0 0 32 32"><circle cx="15.6" cy="15.75" r="15.6" fill="#6554c0"/>
<path d="M15.6 5.6 Q23.6 5.6 24 13.8 Q26.2 14.2 26 16.6 Q25.8 18.6 23.7 18.9 Q22.6 24.2 19.6 26.6 Q17.8 27.7 15.6 27.7 Q13.4 27.7 11.6 26.6 Q8.6 24.2 7.5 18.9 Q5.4 18.6 5.2 16.6 Q5 14.2 7.2 13.8 Q7.6 5.6 15.6 5.6 Z" fill="#fde5dd"/>
<path d="M11.4 19.8 Q15.6 18.4 19.8 19.8 L19.6 26.6 Q17.8 27.7 15.6 27.7 Q13.4 27.7 11.6 26.6 Z" fill="#d9a07e"/>
<ellipse cx="15.6" cy="22.4" rx="2.1" ry="1.2" fill="#1d2b4a"/>
<rect x="11.7" y="14.9" width="1.8" height="1.8" fill="#1d2b4a"/><rect x="18" y="14.9" width="1.8" height="1.8" fill="#1d2b4a"/>
<path d="M10.8 11.8 H13.8 M17.4 11.8 H20.4" stroke="#e8b196" stroke-width="1.1"/></svg>
<div class="a" style="left:1575.50px;top:1037.76px;font-size:23.2px;color:#292929;font-weight:400;font-style:normal;">Raziman</div>
<div class="a" style="left:144.20px;top:219.93px;font-size:23px;color:#172b4d;font-weight:700;font-style:normal;">T</div>
<svg class="a" style="left:163.80px;top:242.00px;" width="14" height="11" viewBox="0 0 14 11"><polyline points="2,3.4 6.6,7.9 11.2,3.4" fill="none" stroke="#111" stroke-width="2.8" stroke-linecap="round" stroke-linejoin="round"/></svg>
<div class="a" style="left:190.00px;width:188.50px;text-align:center;top:219.93px;font-size:23px;color:#172b4d;font-weight:700;">Key</div>
<svg class="a" style="left:352.30px;top:242.00px;" width="14" height="11" viewBox="0 0 14 11"><polyline points="2,3.4 6.6,7.9 11.2,3.4" fill="none" stroke="#111" stroke-width="2.8" stroke-linecap="round" stroke-linejoin="round"/></svg>
<div class="a" style="left:378.50px;width:354.30px;text-align:center;top:219.93px;font-size:23px;color:#172b4d;font-weight:700;">Summary</div>
<svg class="a" style="left:706.60px;top:242.00px;" width="14" height="11" viewBox="0 0 14 11"><polyline points="2,3.4 6.6,7.9 11.2,3.4" fill="none" stroke="#111" stroke-width="2.8" stroke-linecap="round" stroke-linejoin="round"/></svg>
<div class="a" style="left:732.80px;width:301.90px;text-align:center;top:219.93px;font-size:23px;color:#172b4d;font-weight:700;">Description</div>
<svg class="a" style="left:1008.50px;top:242.00px;" width="14" height="11" viewBox="0 0 14 11"><polyline points="2,3.4 6.6,7.9 11.2,3.4" fill="none" stroke="#111" stroke-width="2.8" stroke-linecap="round" stroke-linejoin="round"/></svg>
<div class="a" style="left:1034.70px;width:206.80px;text-align:center;top:219.93px;font-size:23px;color:#172b4d;font-weight:700;">Status</div>
<svg class="a" style="left:1215.30px;top:242.00px;" width="14" height="11" viewBox="0 0 14 11"><polyline points="2,3.4 6.6,7.9 11.2,3.4" fill="none" stroke="#111" stroke-width="2.8" stroke-linecap="round" stroke-linejoin="round"/></svg>
<div class="a" style="left:1241.50px;width:262.70px;text-align:center;top:219.93px;font-size:23px;color:#172b4d;font-weight:700;">Comments</div>
<svg class="a" style="left:1478.00px;top:242.00px;" width="14" height="11" viewBox="0 0 14 11"><polyline points="2,3.4 6.6,7.9 11.2,3.4" fill="none" stroke="#111" stroke-width="2.8" stroke-linecap="round" stroke-linejoin="round"/></svg>
<div class="a" style="left:1504.20px;width:215.30px;text-align:center;top:219.93px;font-size:23px;color:#172b4d;font-weight:700;">Assignee</div>
<svg class="a" style="left:1693.30px;top:242.00px;" width="14" height="11" viewBox="0 0 14 11"><polyline points="2,3.4 6.6,7.9 11.2,3.4" fill="none" stroke="#111" stroke-width="2.8" stroke-linecap="round" stroke-linejoin="round"/></svg>
<div class="a" style="left:1762.50px;top:219.93px;font-size:23px;color:#172b4d;font-weight:700;font-style:normal;">Due Date</div>
<svg class="a" style="left:0;top:0" width="1917" height="1130"><line x1="23.5" y1="194.2" x2="1881" y2="194.2" stroke="#d6d6d6" stroke-width="1.7"/><line x1="23.5" y1="267.4" x2="1881" y2="267.4" stroke="#d2d2d2" stroke-width="2"/><line x1="23.5" y1="321.35" x2="1881" y2="321.35" stroke="#e2e2e2" stroke-width="1.5"/><line x1="23.5" y1="375.30" x2="1881" y2="375.30" stroke="#e2e2e2" stroke-width="1.5"/><line x1="23.5" y1="429.25" x2="1881" y2="429.25" stroke="#e2e2e2" stroke-width="1.5"/><line x1="23.5" y1="483.20" x2="1881" y2="483.20" stroke="#e2e2e2" stroke-width="1.5"/><line x1="23.5" y1="537.15" x2="1881" y2="537.15" stroke="#e2e2e2" stroke-width="1.5"/><line x1="23.5" y1="591.10" x2="1881" y2="591.10" stroke="#e2e2e2" stroke-width="1.5"/><line x1="23.5" y1="645.05" x2="1881" y2="645.05" stroke="#e2e2e2" stroke-width="1.5"/><line x1="23.5" y1="699.00" x2="1881" y2="699.00" stroke="#e2e2e2" stroke-width="1.5"/><line x1="23.5" y1="752.95" x2="1881" y2="752.95" stroke="#e2e2e2" stroke-width="1.5"/><line x1="23.5" y1="806.90" x2="1881" y2="806.90" stroke="#e2e2e2" stroke-width="1.5"/><line x1="23.5" y1="860.85" x2="1881" y2="860.85" stroke="#e2e2e2" stroke-width="1.5"/><line x1="23.5" y1="914.80" x2="1881" y2="914.80" stroke="#e2e2e2" stroke-width="1.5"/><line x1="23.5" y1="968.75" x2="1881" y2="968.75" stroke="#e2e2e2" stroke-width="1.5"/><line x1="23.5" y1="1022.70" x2="1881" y2="1022.70" stroke="#e2e2e2" stroke-width="1.5"/><line x1="23.5" y1="1076.65" x2="1881" y2="1076.65" stroke="#e2e2e2" stroke-width="1.5"/><line x1="111.5" y1="194.2" x2="111.5" y2="1090.6" stroke="#d4d4d4" stroke-width="2"/><line x1="190" y1="194.2" x2="190" y2="1090.6" stroke="#e3e3e3" stroke-width="1.4"/><line x1="378.5" y1="194.2" x2="378.5" y2="1090.6" stroke="#e3e3e3" stroke-width="1.4"/><line x1="732.8" y1="194.2" x2="732.8" y2="1090.6" stroke="#e3e3e3" stroke-width="1.4"/><line x1="1034.7" y1="194.2" x2="1034.7" y2="1090.6" stroke="#e3e3e3" stroke-width="1.4"/><line x1="1241.5" y1="194.2" x2="1241.5" y2="1090.6" stroke="#e3e3e3" stroke-width="1.4"/><line x1="1504.2" y1="194.2" x2="1504.2" y2="1090.6" stroke="#e3e3e3" stroke-width="1.4"/><line x1="1719.5" y1="194.2" x2="1719.5" y2="1090.6" stroke="#e3e3e3" stroke-width="1.4"/><line x1="23.5" y1="1090.6" x2="1881" y2="1090.6" stroke="#dcdcdc" stroke-width="1.6"/><line x1="23.5" y1="194.2" x2="23.5" y2="1090.6" stroke="#d8d8d8" stroke-width="1.6"/><line x1="1881" y1="194.2" x2="1881" y2="1090.6" stroke="#e0e0e0" stroke-width="1.4"/></svg>
<div class="a" style="left:0.00px;top:1091.40px;width:1917.00px;height:39.40px;background:#fff;border-radius:0px;"></div>
<div class="a" style="left:0;top:1097px;width:1917px;height:33px;background:linear-gradient(180deg,rgba(238,238,238,0),rgba(238,238,238,1))"></div>
<div class="a" style="left:0;top:1097px;width:1917px;height:33px;background:linear-gradient(90deg,rgba(255,255,255,0) 0%,rgba(255,255,255,0) 55%,rgba(255,255,255,0.55) 100%)"></div>
<div class="a" style="left:139.00px;top:1088.80px;width:25.00px;height:2.20px;background:#57c191;border-radius:1px;"></div>
<div class="a" style="left:1062.00px;top:1089.40px;width:66.00px;height:1.60px;background:#e9fbf1;border-radius:0px;"></div>
<div class="a" style="left:1536px;top:1087.5px;width:17px;height:3.5px;border-radius:9px 9px 0 0;background:#c9c9c9"></div></body></html>
